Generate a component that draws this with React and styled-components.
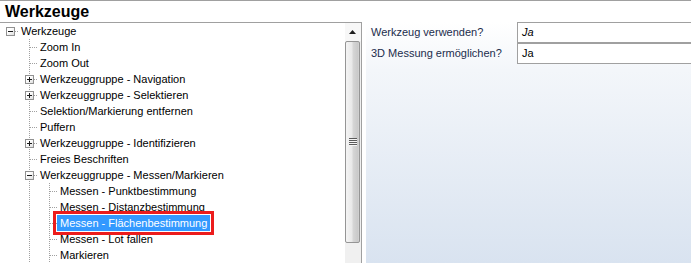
import React from "react";
import styled, { createGlobalStyle } from "styled-components";

const GlobalStyle = createGlobalStyle`
    html, body {
        margin: 0;
        padding: 0;
        background: #ffffff;
    }
    body {
        font-family: "Liberation Sans", Arial, sans-serif;
    }
`;

const LINE = "#a0a0a0";

// column geometry of the tree: cell width and x of the guide line inside it
const COLS = [
    { w: 18, x: 10 },
    { w: 19, x: 11 },
    { w: 20, x: 12 },
];

const items = [
    { text: "Werkzeuge", level: 0, expander: "minus" },
    { text: "Zoom In", level: 1 },
    { text: "Zoom Out", level: 1 },
    { text: "Werkzeuggruppe - Navigation", level: 1, expander: "plus" },
    { text: "Werkzeuggruppe - Selektieren", level: 1, expander: "plus" },
    { text: "Selektion/Markierung entfernen", level: 1 },
    { text: "Puffern", level: 1 },
    { text: "Werkzeuggruppe - Identifizieren", level: 1, expander: "plus" },
    { text: "Freies Beschriften", level: 1 },
    { text: "Werkzeuggruppe - Messen/Markieren", level: 1, expander: "minus" },
    { text: "Messen - Punktbestimmung", level: 2 },
    { text: "Messen - Distanzbestimmung", level: 2 },
    { text: "Messen - Flächenbestimmung", level: 2, selected: true },
    { text: "Messen - Lot fallen", level: 2 },
    { text: "Markieren", level: 2 },
];

const properties = [
    { label: "Werkzeug verwenden?", value: "Ja", italic: true },
    { label: "3D Messung ermöglichen?", value: "Ja" },
];

const Page = styled.div`
    width: 691px;
    height: 263px;
    overflow: hidden;
    border-top: 1px solid ${LINE};
    box-sizing: border-box;
    display: flex;
    flex-direction: column;
`;

const Header = styled.div`
    height: 21px;
    line-height: 21px;
    padding-left: 5px;
    font-size: 16px;
    font-weight: bold;
    color: #000;
    flex-shrink: 0;
`;

const Body = styled.div`
    flex: 1;
    display: flex;
    min-height: 0;
`;

const TreePanel = styled.div`
    width: 362px;
    box-sizing: border-box;
    border-top: 1px solid ${LINE};
    border-right: 1px solid ${LINE};
    display: flex;
    overflow: hidden;
`;

const TreeList = styled.div`
    flex: 1;
    min-width: 0;
    overflow: hidden;
    font-size: 11px;
    color: #000;
`;

const Row = styled.div`
    display: flex;
    height: 16px;
    align-items: center;
    white-space: nowrap;
`;

const vertical = (x) =>
    `repeating-linear-gradient(to bottom, ${LINE} 0 1px, transparent 1px 2px) ${x}px 0 / 1px 100% no-repeat`;
const horizontal = (x, w) =>
    `repeating-linear-gradient(to right, ${LINE} 0 1px, transparent 1px 2px) ${x + 1}px 8px / ${w - x - 1}px 1px no-repeat`;

const Cell = styled.div`
    width: ${(p) => p.$w}px;
    height: 16px;
    flex-shrink: 0;
    display: flex;
    align-items: center;
    background: ${(p) =>
        [p.$horiz && horizontal(p.$x, p.$w), p.$vert && vertical(p.$x)]
            .filter(Boolean)
            .join(", ") || "none"};
`;

const ExpanderBox = styled.span`
    width: 9px;
    height: 9px;
    box-sizing: border-box;
    margin-left: ${(p) => p.$x - 4}px;
    margin-top: 1px;
    border: 1px solid #919191;
    background: linear-gradient(135deg, #ffffff 35%, #dedede 100%);
    display: flex;
    align-items: center;
    justify-content: center;
`;

const Label = styled.span`
    padding: 0 3px;
    height: 16px;
    line-height: 16px;
    background: ${(p) => (p.$selected ? "#3399ff" : "transparent")};
    color: ${(p) => (p.$selected ? "#ffffff" : "inherit")};
    outline: ${(p) => (p.$selected ? "3px solid #ec1c1c" : "none")};
    outline-offset: 1px;
`;

const ScrollBar = styled.div`
    width: 16px;
    flex-shrink: 0;
    background: #f0f0f0;
    display: flex;
    flex-direction: column;
`;

const ScrollButton = styled.div`
    height: 18px;
    flex-shrink: 0;
    background: #f7f7f7;
    display: flex;
    align-items: center;
    justify-content: center;
    padding-right: 1px;
`;

const Thumb = styled.div`
    width: 15px;
    height: 202px;
    box-sizing: border-box;
    border: 1px solid #959595;
    border-radius: 2px;
    background: linear-gradient(
        to right,
        #f4f4f4 0%,
        #e9e9e9 45%,
        #d6d6d6 55%,
        #c9c9c9 90%,
        #d4d4d4 100%
    );
    display: flex;
    align-items: center;
    justify-content: center;
`;

const Grip = styled.div`
    width: 8px;
    height: 8px;
    background: repeating-linear-gradient(
        to bottom,
        #5a5a5a 0 1px,
        #f4f4f4 1px 2px
    );
`;

const Gap = styled.div`
    width: 4px;
    flex-shrink: 0;
`;

const PropertyPanel = styled.div`
    flex: 1;
    min-width: 0;
    background: linear-gradient(to bottom, #ffffff 0%, #f3f6fa 20%, #d9e3f0 100%);
    font-size: 11px;
`;

const PropertyRow = styled.div`
    display: flex;
    height: 21px;
`;

const PropertyLabel = styled.div`
    width: 151px;
    flex-shrink: 0;
    padding-left: 5px;
    box-sizing: border-box;
    line-height: 21px;
    color: #1b2c4c;
    white-space: nowrap;
`;

const PropertyValue = styled.div`
    flex: 1;
    margin-right: -4px;
    border: 1px solid ${LINE};
    background: #ffffff;
    padding-left: 4px;
    line-height: 19px;
    color: #000;
    font-style: ${(p) => (p.$italic ? "italic" : "normal")};
`;

const ExpanderGlyph = ({ type }) => (
    <svg width="7" height="7" viewBox="0 0 7 7">
        <rect x="1" y="3" width="5" height="1" fill="#1a1a1a" />
        {type === "plus" && <rect x="3" y="1" width="1" height="5" fill="#1a1a1a" />}
    </svg>
);

const TreeRow = ({ item }) => (
    <Row>
        {COLS.slice(0, item.level + 1).map((col, k) => {
            const own = k === item.level;
            const vert = k > 0;
            return (
                <Cell key={k} $w={col.w} $x={col.x} $vert={vert} $horiz={own}>
                    {own && item.expander && (
                        <ExpanderBox $x={col.x}>
                            <ExpanderGlyph type={item.expander} />
                        </ExpanderBox>
                    )}
                </Cell>
            );
        })}
        <Label $selected={item.selected}>{item.text}</Label>
    </Row>
);

const App = () => (
    <>
        <GlobalStyle />
        <Page>
            <Header>Werkzeuge</Header>
            <Body>
                <TreePanel>
                    <TreeList>
                        {items.map((item, index) => (
                            <TreeRow key={index} item={item} />
                        ))}
                    </TreeList>
                    <ScrollBar>
                        <ScrollButton>
                            <svg width="7" height="4" viewBox="0 0 7 4">
                                <polygon points="3.5,0 7,4 0,4" fill="#1e1e1e" />
                            </svg>
                        </ScrollButton>
                        <Thumb>
                            <Grip />
                        </Thumb>
                    </ScrollBar>
                </TreePanel>
                <Gap />
                <PropertyPanel>
                    {properties.map((prop, index) => (
                        <PropertyRow key={index}>
                            <PropertyLabel>{prop.label}</PropertyLabel>
                            <PropertyValue $italic={prop.italic}>{prop.value}</PropertyValue>
                        </PropertyRow>
                    ))}
                </PropertyPanel>
            </Body>
        </Page>
    </>
);

export default App;
